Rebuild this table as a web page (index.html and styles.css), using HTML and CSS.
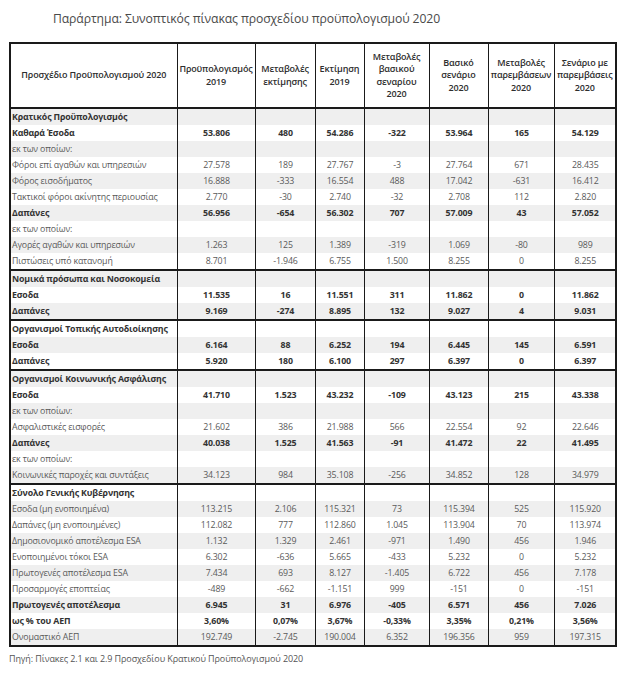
FILE: index.html
```html
<!DOCTYPE html>
<html lang="el">
<head>
<meta charset="utf-8">
<title>Παράρτημα</title>
<link rel="stylesheet" href="styles.css">
</head>
<body>
<div class="page">
  <h1 class="title">Παράρτημα: Συνοπτικός πίνακας προσχεδίου προϋπολογισμού 2020</h1>
  <table class="budget">
    <colgroup>
      <col class="c1"><col class="c2"><col class="c3"><col class="c4"><col class="c5"><col class="c6"><col class="c7"><col class="c8">
    </colgroup>
    <thead>
      <tr>
        <th>Προσχέδιο Προϋπολογισμού 2020</th>
        <th>Προϋπολογισμός<br>2019</th>
        <th>Μεταβολές<br>εκτίμησης</th>
        <th>Εκτίμηση<br>2019</th>
        <th>Μεταβολές<br>βασικού<br>σεναρίου<br>2020</th>
        <th>Βασικό<br>σενάριο<br>2020</th>
        <th>Μεταβολές<br>παρεμβάσεων<br>2020</th>
        <th>Σενάριο με<br>παρεμβάσεις<br>2020</th>
      </tr>
    </thead>
    <tbody>
      <tr class="sec b"><td>Κρατικός Προϋπολογισμός</td><td></td><td></td><td></td><td></td><td></td><td></td><td></td></tr>
      <tr class="b"><td>Καθαρά Έσοδα</td><td>53.806</td><td>480</td><td>54.286</td><td>-322</td><td>53.964</td><td>165</td><td>54.129</td></tr>
      <tr><td>εκ των οποίων:</td><td></td><td></td><td></td><td></td><td></td><td></td><td></td></tr>
      <tr><td>Φόροι επί αγαθών και υπηρεσιών</td><td>27.578</td><td>189</td><td>27.767</td><td>-3</td><td>27.764</td><td>671</td><td>28.435</td></tr>
      <tr><td>Φόρος εισοδήματος</td><td>16.888</td><td>-333</td><td>16.554</td><td>488</td><td>17.042</td><td>-631</td><td>16.412</td></tr>
      <tr><td>Τακτικοί φόροι ακίνητης περιουσίας</td><td>2.770</td><td>-30</td><td>2.740</td><td>-32</td><td>2.708</td><td>112</td><td>2.820</td></tr>
      <tr class="b"><td>Δαπάνες</td><td>56.956</td><td>-654</td><td>56.302</td><td>707</td><td>57.009</td><td>43</td><td>57.052</td></tr>
      <tr><td>εκ των οποίων:</td><td></td><td></td><td></td><td></td><td></td><td></td><td></td></tr>
      <tr><td>Αγορές αγαθών και υπηρεσιών</td><td>1.263</td><td>125</td><td>1.389</td><td>-319</td><td>1.069</td><td>-80</td><td>989</td></tr>
      <tr><td>Πιστώσεις υπό κατανομή</td><td>8.701</td><td>-1.946</td><td>6.755</td><td>1.500</td><td>8.255</td><td>0</td><td>8.255</td></tr>
      <tr class="sec b"><td>Νομικά πρόσωπα και Νοσοκομεία</td><td></td><td></td><td></td><td></td><td></td><td></td><td></td></tr>
      <tr class="b"><td>Εσοδα</td><td>11.535</td><td>16</td><td>11.551</td><td>311</td><td>11.862</td><td>0</td><td>11.862</td></tr>
      <tr class="b"><td>Δαπάνες</td><td>9.169</td><td>-274</td><td>8.895</td><td>132</td><td>9.027</td><td>4</td><td>9.031</td></tr>
      <tr class="sec b"><td>Οργανισμοί Τοπικής Αυτοδιοίκησης</td><td></td><td></td><td></td><td></td><td></td><td></td><td></td></tr>
      <tr class="b"><td>Εσοδα</td><td>6.164</td><td>88</td><td>6.252</td><td>194</td><td>6.445</td><td>145</td><td>6.591</td></tr>
      <tr class="b"><td>Δαπάνες</td><td>5.920</td><td>180</td><td>6.100</td><td>297</td><td>6.397</td><td>0</td><td>6.397</td></tr>
      <tr class="sec b"><td>Οργανισμοί Κοινωνικής Ασφάλισης</td><td></td><td></td><td></td><td></td><td></td><td></td><td></td></tr>
      <tr class="b"><td>Εσοδα</td><td>41.710</td><td>1.523</td><td>43.232</td><td>-109</td><td>43.123</td><td>215</td><td>43.338</td></tr>
      <tr><td>εκ των οποίων:</td><td></td><td></td><td></td><td></td><td></td><td></td><td></td></tr>
      <tr><td>Ασφαλιστικές εισφορές</td><td>21.602</td><td>386</td><td>21.988</td><td>566</td><td>22.554</td><td>92</td><td>22.646</td></tr>
      <tr class="b"><td>Δαπάνες</td><td>40.038</td><td>1.525</td><td>41.563</td><td>-91</td><td>41.472</td><td>22</td><td>41.495</td></tr>
      <tr><td>εκ των οποίων:</td><td></td><td></td><td></td><td></td><td></td><td></td><td></td></tr>
      <tr><td>Κοινωνικές παροχές και συντάξεις</td><td>34.123</td><td>984</td><td>35.108</td><td>-256</td><td>34.852</td><td>128</td><td>34.979</td></tr>
      <tr class="sec b"><td>Σύνολο Γενικής Κυβέρνησης</td><td></td><td></td><td></td><td></td><td></td><td></td><td></td></tr>
      <tr><td>Εσοδα (μη ενοποιημένα)</td><td>113.215</td><td>2.106</td><td>115.321</td><td>73</td><td>115.394</td><td>525</td><td>115.920</td></tr>
      <tr><td>Δαπάνες (μη ενοποιημένες)</td><td>112.082</td><td>777</td><td>112.860</td><td>1.045</td><td>113.904</td><td>70</td><td>113.974</td></tr>
      <tr><td>Δημοσιονομικό αποτέλεσμα ESA</td><td>1.132</td><td>1.329</td><td>2.461</td><td>-971</td><td>1.490</td><td>456</td><td>1.946</td></tr>
      <tr><td>Ενοποιημένοι τόκοι ESA</td><td>6.302</td><td>-636</td><td>5.665</td><td>-433</td><td>5.232</td><td>0</td><td>5.232</td></tr>
      <tr><td>Πρωτογενές αποτέλεσμα ESA</td><td>7.434</td><td>693</td><td>8.127</td><td>-1.405</td><td>6.722</td><td>456</td><td>7.178</td></tr>
      <tr><td>Προσαρμογές εποπτείας</td><td>-489</td><td>-662</td><td>-1.151</td><td>999</td><td>-151</td><td>0</td><td>-151</td></tr>
      <tr class="b"><td>Πρωτογενές αποτέλεσμα</td><td>6.945</td><td>31</td><td>6.976</td><td>-405</td><td>6.571</td><td>456</td><td>7.026</td></tr>
      <tr class="b"><td>ως % του ΑΕΠ</td><td>3,60%</td><td>0,07%</td><td>3,67%</td><td>-0,33%</td><td>3,35%</td><td>0,21%</td><td>3,56%</td></tr>
      <tr><td>Ονομαστικό ΑΕΠ</td><td>192.749</td><td>-2.745</td><td>190.004</td><td>6.352</td><td>196.356</td><td>959</td><td>197.315</td></tr>
    </tbody>
  </table>
  <p class="source">Πηγή: Πίνακες 2.1 και 2.9 Προσχεδίου Κρατικού Προϋπολογισμού 2020</p>
</div>
</body>
</html>
```

FILE: styles.css
```css
html, body {
  margin: 0;
  padding: 0;
  background: #ffffff;
}

.page {
  padding: 9px 0 0 9px;
  font-family: "Open Sans", "Noto Sans", "DejaVu Sans", sans-serif;
}

.title {
  margin: 0 0 14px 44px;
  font-size: 12.2px;
  font-weight: 400;
  line-height: 19px;
  color: #4a4a4a;
  letter-spacing: -0.1px;
}

.budget {
  border-collapse: collapse;
  table-layout: fixed;
  width: 607px;
  border: 2px solid #1a1a1a;
  font-size: 8.8px;
  letter-spacing: -0.15px;
}

.c1 { width: 167px; }
.c2 { width: 78px; }
.c3 { width: 60px; }
.c4 { width: 49px; }
.c5 { width: 65px; }
.c6 { width: 59px; }
.c7 { width: 66px; }
.c8 { width: 62px; }

.budget th {
  height: 63px;
  padding: 0 1px;
  font-size: 9px;
  font-weight: 600;
  line-height: 12.5px;
  color: #2e2e2e;
  text-align: center;
  vertical-align: middle;
  border-left: 1px solid #1a1a1a;
  border-bottom: 2px solid #1a1a1a;
}

.budget td {
  height: 16px;
  padding: 0 0 0 1px;
  line-height: 16px;
  color: #5a5a5a;
  text-align: center;
  white-space: nowrap;
  overflow: hidden;
  border-left: 1px solid #1a1a1a;
}

.budget td:first-child {
  text-align: left;
}

.budget tbody tr:nth-child(odd) td {
  background: #efefef;
}

.budget tr.b td {
  font-weight: 700;
  color: #333333;
}

.budget tr.sec td {
  border-top: 2px solid #1a1a1a;
}

.budget tbody tr:first-child td {
  border-top: 0;
}

.source {
  margin: 6px 0 0 0;
  font-size: 9px;
  line-height: 12px;
  color: #555555;
  letter-spacing: -0.1px;
}
```
